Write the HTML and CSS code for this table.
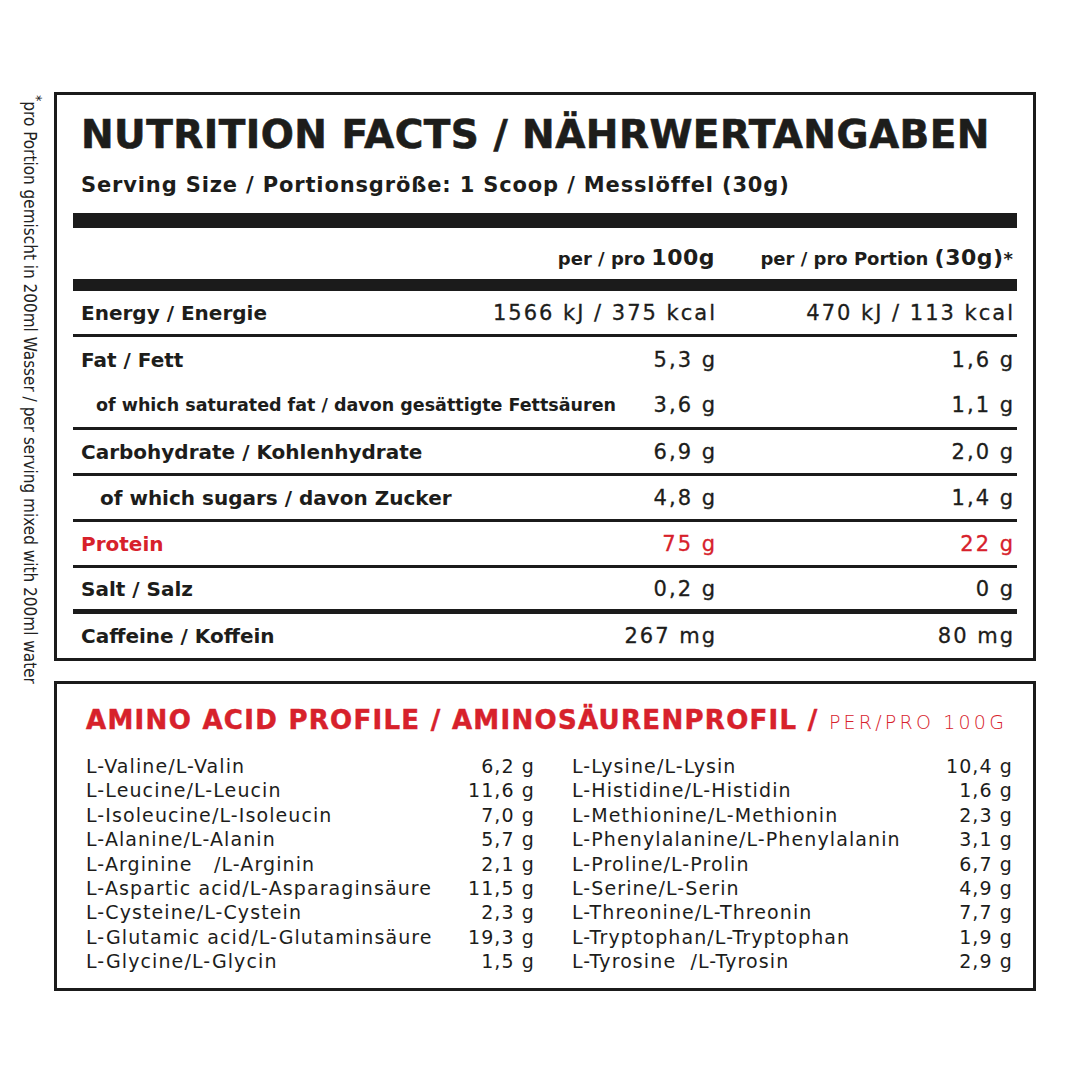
FILE: index.html
```html
<!DOCTYPE html>
<html lang="de">
<head>
<meta charset="utf-8">
<title>Nutrition Facts</title>
<link rel="stylesheet" href="styles.css">
</head>
<body>
<div class="page">
  <div class="side"><sup>*</sup>pro Portion gemischt in 200ml Wasser / per serving mixed with 200ml water</div>
  <div class="main">
    <section class="facts">
      <h1 class="title">NUTRITION FACTS / NÄHRWERTANGABEN</h1>
      <p class="serving">Serving Size / Portionsgröße: 1 Scoop / Messlöffel (30g)</p>
      <div class="bar bar-top"></div>
      <div class="row head">
        <span class="label"></span>
        <span class="v1">per / pro <b>100g</b></span>
        <span class="v2">per / pro Portion <b>(30g)</b>*</span>
      </div>
      <div class="bar bar-mid"></div>
      <div class="row r-energy">
        <span class="label">Energy / Energie</span>
        <span class="v1">1566 kJ / 375 kcal</span>
        <span class="v2">470 kJ / 113 kcal</span>
      </div>
      <div class="group">
        <div class="row r-fat">
          <span class="label">Fat / Fett</span>
          <span class="v1">5,3 g</span>
          <span class="v2">1,6 g</span>
        </div>
        <div class="row r-sat">
          <span class="label sub-small">of which saturated fat / davon gesättigte Fettsäuren</span>
          <span class="v1">3,6 g</span>
          <span class="v2">1,1 g</span>
        </div>
      </div>
      <div class="row line">
        <span class="label">Carbohydrate / Kohlenhydrate</span>
        <span class="v1">6,9 g</span>
        <span class="v2">2,0 g</span>
      </div>
      <div class="row line">
        <span class="label sub">of which sugars / davon Zucker</span>
        <span class="v1">4,8 g</span>
        <span class="v2">1,4 g</span>
      </div>
      <div class="row line red">
        <span class="label">Protein</span>
        <span class="v1">75 g</span>
        <span class="v2">22 g</span>
      </div>
      <div class="row thick">
        <span class="label">Salt / Salz</span>
        <span class="v1">0,2 g</span>
        <span class="v2">0 g</span>
      </div>
      <div class="row last">
        <span class="label">Caffeine / Koffein</span>
        <span class="v1">267 mg</span>
        <span class="v2">80 mg</span>
      </div>
    </section>

    <section class="amino">
      <h2 class="amino-title">AMINO ACID PROFILE / AMINOSÄURENPROFIL / <span class="per">PER/PRO 100G</span></h2>
      <div class="amino-grid">
        <ul class="acids">
          <li><span>L-Valine/L-Valin</span><span>6,2 g</span></li>
          <li><span>L-Leucine/L-Leucin</span><span>11,6 g</span></li>
          <li><span>L-Isoleucine/L-Isoleucin</span><span>7,0 g</span></li>
          <li><span>L-Alanine/L-Alanin</span><span>5,7 g</span></li>
          <li><span>L-Arginine   /L-Arginin</span><span>2,1 g</span></li>
          <li><span>L-Aspartic acid/L-Asparaginsäure</span><span>11,5 g</span></li>
          <li><span>L-Cysteine/L-Cystein</span><span>2,3 g</span></li>
          <li><span>L-Glutamic acid/L-Glutaminsäure</span><span>19,3 g</span></li>
          <li><span>L-Glycine/L-Glycin</span><span>1,5 g</span></li>
        </ul>
        <ul class="acids">
          <li><span>L-Lysine/L-Lysin</span><span>10,4 g</span></li>
          <li><span>L-Histidine/L-Histidin</span><span>1,6 g</span></li>
          <li><span>L-Methionine/L-Methionin</span><span>2,3 g</span></li>
          <li><span>L-Phenylalanine/L-Phenylalanin</span><span>3,1 g</span></li>
          <li><span>L-Proline/L-Prolin</span><span>6,7 g</span></li>
          <li><span>L-Serine/L-Serin</span><span>4,9 g</span></li>
          <li><span>L-Threonine/L-Threonin</span><span>7,7 g</span></li>
          <li><span>L-Tryptophan/L-Tryptophan</span><span>1,9 g</span></li>
          <li><span>L-Tyrosine  /L-Tyrosin</span><span>2,9 g</span></li>
        </ul>
      </div>
    </section>
  </div>
</div>
</body>
</html>
```
FILE: styles.css
```css
* { box-sizing: border-box; }

body {
  margin: 0;
  background: #ffffff;
  color: #1d1d1b;
  font-family: "DejaVu Sans", sans-serif;
}

.page {
  display: flex;
  width: 1080px;
  height: 1080px;
}

/* vertical footnote */
.side {
  width: 54px;
  flex: none;
  writing-mode: vertical-rl;
  padding-top: 95px;
  padding-right: 13px;
  font-family: "Liberation Sans Narrow", "DejaVu Sans Condensed", sans-serif;
  font-size: 17px;
  line-height: 22px;
  color: #222;
  white-space: nowrap;
}
.side sup {
  font-size: 14px;
  line-height: 0;
}

.main {
  width: 982px;
  flex: none;
  padding-top: 92px;
  display: flex;
  flex-direction: column;
  gap: 20px;
}

/* ---------- nutrition box ---------- */
.facts {
  border: 3px solid #1b1b1b;
  padding: 20px 16px 0;
}

.title {
  margin: 0 0 0 8px;
  font-family: "DejaVu Sans", sans-serif;
  font-weight: bold;
  font-size: 39px;
  line-height: 40px;
  letter-spacing: 0.45px;
  -webkit-text-stroke: 0.6px #1d1d1b;
  white-space: nowrap;
}

.serving {
  margin: 18px 0 0 8px;
  font-weight: bold;
  font-size: 21px;
  line-height: 24px;
  letter-spacing: 0.85px;
  white-space: nowrap;
}

.bar { background: #1b1b1b; }
.bar-top { height: 15px; margin-top: 16px; }
.bar-mid { height: 12px; }

.row {
  display: flex;
  align-items: center;
  padding: 0 4px 0 8px;
  white-space: nowrap;
}
.label {
  flex: 1;
  min-width: 0;
  font-weight: bold;
  font-size: 20px;
}
.v1, .v2 {
  text-align: right;
  font-size: 21px;
  letter-spacing: 2px;
  margin-right: -2px;
  -webkit-text-stroke: 0.3px currentColor;
}
.v2 { width: 300px; flex: none; }

.head { height: 51px; padding-top: 8px; }
.head .v1, .head .v2 {
  font-weight: bold;
  font-size: 18px;
  letter-spacing: 0;
  margin-right: 0;
  -webkit-text-stroke: 0;
}
.head b { font-size: 22px; letter-spacing: 0.5px; }
.head .v2 { width: 298px; }

.r-energy { height: 46px; border-bottom: 3px solid #1b1b1b; }
.group { border-bottom: 3px solid #1b1b1b; }
.r-fat { height: 46px; }
.r-sat { height: 44px; }
.line { height: 46px; border-bottom: 3px solid #1b1b1b; }
.thick { height: 46px; border-bottom: 5px solid #1b1b1b; }
.last { height: 44px; }

.sub-small { font-size: 17.5px; padding-left: 15px; }
.sub { padding-left: 19px; }

.red { color: #d7212b; }

/* ---------- amino box ---------- */
.amino {
  border: 3px solid #1b1b1b;
  height: 310px;
  padding: 21px 20px 0 29px;
}

.amino-title {
  margin: 0 0 17px;
  color: #d7212b;
  font-weight: bold;
  font-size: 26px;
  line-height: 30px;
  letter-spacing: 1.3px;
  -webkit-text-stroke: 0.5px #d7212b;
  white-space: nowrap;
}
.amino-title .per {
  font-weight: 200;
  font-size: 19px;
  letter-spacing: 3.2px;
  -webkit-text-stroke: 0;
}

.amino-grid {
  display: grid;
  grid-template-columns: 448px 440px;
  column-gap: 38px;
}

.acids {
  list-style: none;
  margin: 0;
  padding: 0;
}
.acids li {
  display: flex;
  justify-content: space-between;
  font-size: 19px;
  line-height: 24.4px;
  letter-spacing: 1.1px;
  white-space: pre;
}
.acids li span:last-child { margin-right: -1px; }
```
